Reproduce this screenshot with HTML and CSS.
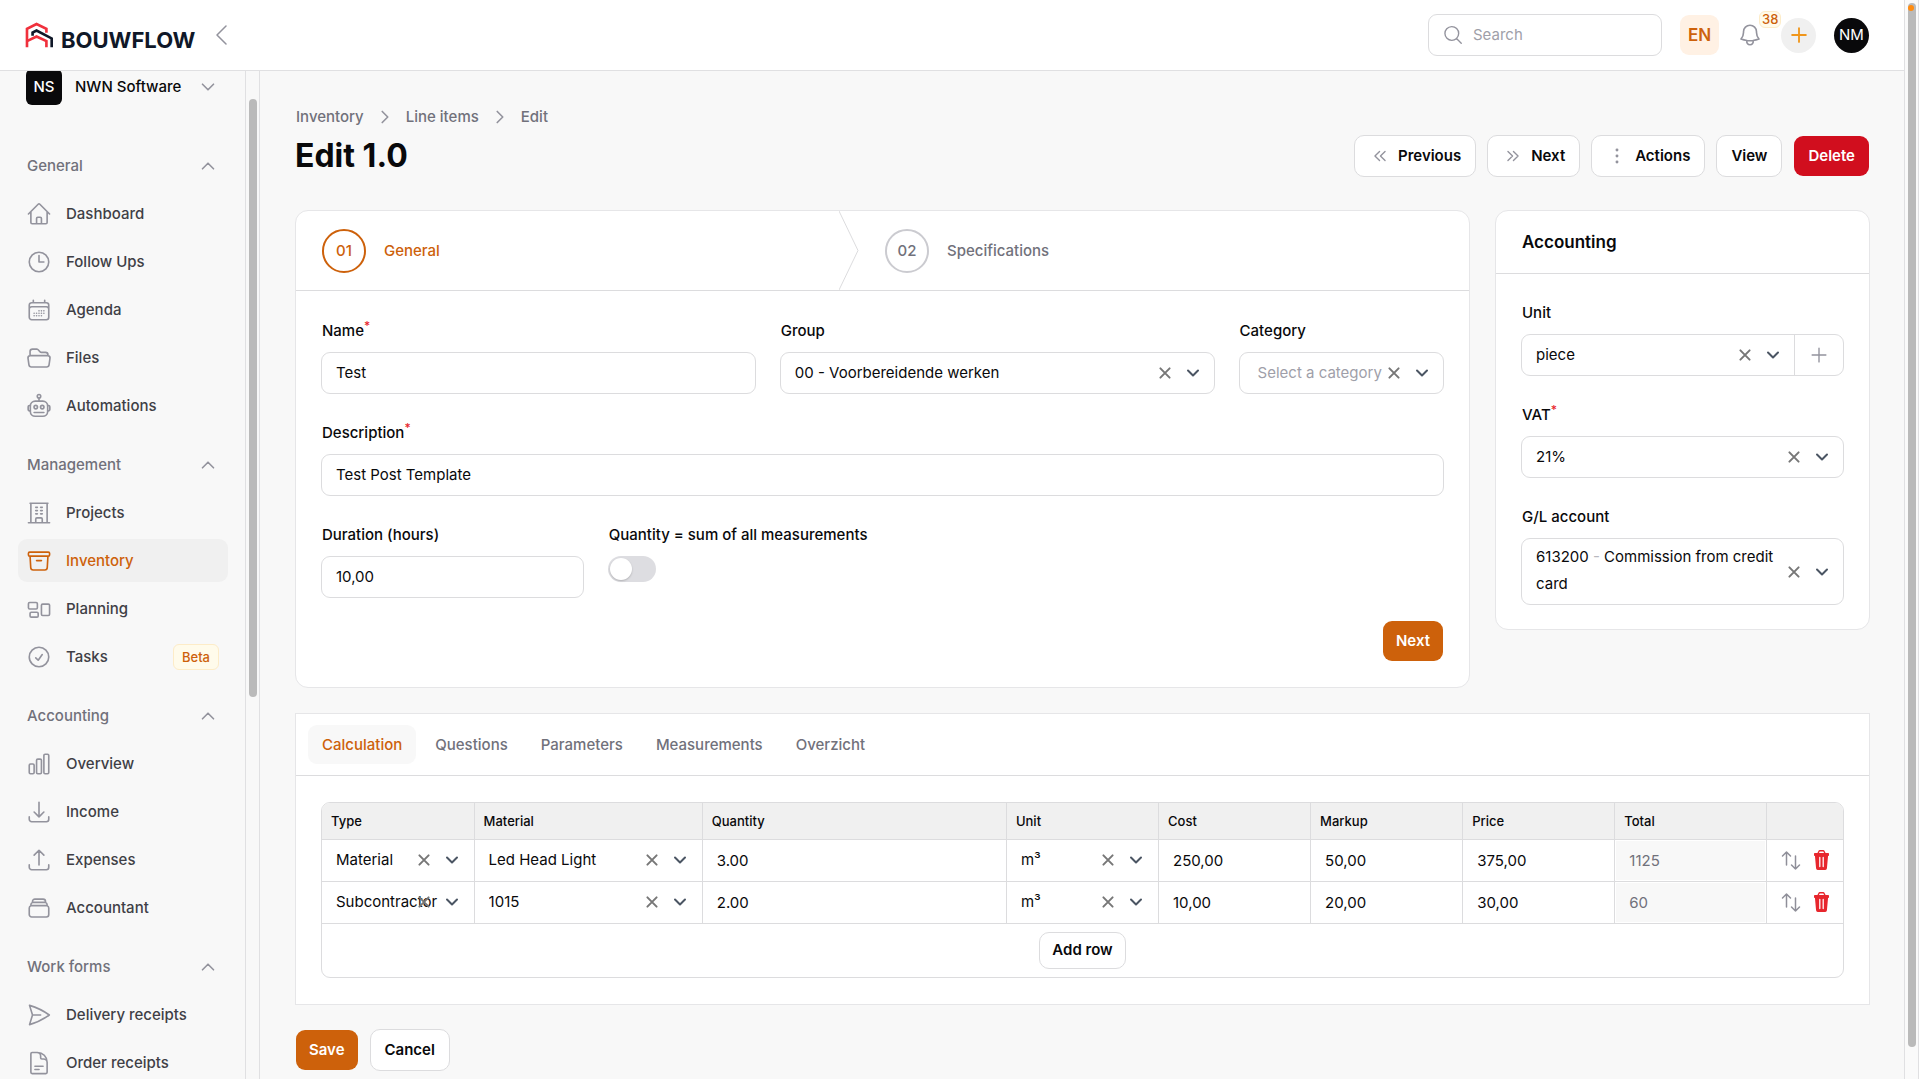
FILE: index.html
```html
<!DOCTYPE html>
<html lang="en">
<head>
    <meta charset="UTF-8">
    <meta name="viewport" content="width=device-width, initial-scale=1.0">
    <title>Edit 1.0 - Bouwflow</title>
    <link rel="stylesheet" href="styles.css">
</head>
<body>
    <!-- Shared icons -->
    <svg class="sprite" aria-hidden="true">
        <symbol id="i-down" viewBox="0 0 20 20"><path d="m5 7.500 5 5 5-5"/></symbol>
        <symbol id="i-up" viewBox="0 0 20 20"><path d="m5 12.500 5-5 5 5"/></symbol>
        <symbol id="i-right" viewBox="0 0 20 20"><path d="m7.500 5 5 5-5 5"/></symbol>
        <symbol id="i-x" viewBox="0 0 20 20"><path d="m5.400 5.400 9.200 9.200M14.600 5.400l-9.200 9.200"/></symbol>
        <symbol id="i-plus" viewBox="0 0 24 24"><path d="M12 4.500v15m7.500-7.500h-15"/></symbol>
        <symbol id="i-sort" viewBox="0 0 22 22"><path d="M6.500 16V3M2.500 7l4-4 4 4M15.500 7v13M11.500 16l4 4 4-4"/></symbol>
        <symbol id="i-trash" viewBox="0 0 20 22" preserveAspectRatio="none"><path fill="currentColor" stroke="none" d="M2 4h3.200L6.700 1.600Q7.100 1 7.800 1h4.400q.7 0 1.100.6L14.800 4H18a.8.8 0 0 1 .8.8v1.400a.8.8 0 0 1-.8.8h-.3l-1.300 12.200a2 2 0 0 1-2 1.800H5.600a2 2 0 0 1-2-1.800L2.300 7H2a.8.8 0 0 1-.8-.8V4.800A.8.8 0 0 1 2 4Zm5 0h6l-.9-1.500H7.900Z"/><path class="slits" d="M8 8.500v9M12 8.500v9"/></symbol>
    </svg>

    <div class="app">
        <div class="shell">
            <header class="topbar">
                <a class="logo" href="#" aria-label="Bouwflow">
                    <svg class="logo-mark" viewBox="76 64 88 82">
                        <path class="red" d="M82 144V88l29-15 30 15v12"/>
                        <path class="dark" d="M99 109V99l12-6 46 24v27"/>
                        <path class="red" d="m82 125 29-14 30 14v19"/>
                    </svg>
                    <span>BOUWFLOW</span>
                </a>
                <button class="collapse" aria-label="Collapse sidebar">
                    <svg viewBox="0 0 12 20"><path d="m11 1-9 9 9 9"/></svg>
                </button>
                <div class="topbar-end">
                    <label class="search">
                        <svg class="icon-sm" viewBox="0 0 24 24"><path d="m21 21-5.200-5.200m0 0A7.500 7.500 0 1 0 5.200 5.200a7.500 7.500 0 0 0 10.600 10.600Z"/></svg>
                        <input type="search" placeholder="Search" aria-label="Search">
                    </label>
                    <button class="lang">EN</button>
                    <button class="bell" aria-label="Notifications">
                        <svg class="icon" viewBox="0 0 24 24"><path d="M14.857 17.082a23.848 23.848 0 0 0 5.454-1.31A8.967 8.967 0 0 1 18 9.75V9A6 6 0 0 0 6 9v.75a8.967 8.967 0 0 1-2.312 6.022c1.733.64 3.56 1.085 5.455 1.31m5.714 0a24.255 24.255 0 0 1-5.714 0m5.714 0a3 3 0 1 1-5.714 0"/></svg>
                        <span class="count">38</span>
                    </button>
                    <button class="add" aria-label="Create"><svg viewBox="0 0 24 24"><use href="#i-plus"/></svg></button>
                    <button class="avatar">NM</button>
                </div>
            </header>

            <div class="body">
                <aside class="sidebar">
                    <button class="tenant">
                        <span class="tenant-logo">NS</span>
                        <span class="tenant-name">NWN Software</span>
                        <svg class="chevron"><use href="#i-down"/></svg>
                    </button>
                    <nav>
                        <section class="group">
                            <button class="group-title">General <svg class="chevron"><use href="#i-up"/></svg></button>
                            <a class="item" href="#"><svg class="icon" viewBox="0 0 24 24"><path d="m2.250 12 8.954-8.955c.44-.439 1.152-.439 1.591 0L21.750 12M4.500 9.750v10.125c0 .621.504 1.125 1.125 1.125H9.750v-4.875c0-.621.504-1.125 1.125-1.125h2.250c.621 0 1.125.504 1.125 1.125V21h4.125c.621 0 1.125-.504 1.125-1.125V9.750M8.250 21h8.250"/></svg>Dashboard</a>
                            <a class="item" href="#"><svg class="icon" viewBox="0 0 24 24"><path d="M12 6v6h4.500m4.500 0a9 9 0 1 1-18 0 9 9 0 0 1 18 0Z"/></svg>Follow Ups</a>
                            <a class="item" href="#"><svg class="icon" viewBox="0 0 24 24"><path d="M6.75 3v2.25M17.25 3v2.25M3 18.75V7.5a2.25 2.25 0 0 1 2.25-2.25h13.5A2.25 2.25 0 0 1 21 7.5v11.25m-18 0A2.25 2.25 0 0 0 5.25 21h13.5A2.25 2.25 0 0 0 21 18.75m-18 0v-7.5A2.25 2.25 0 0 1 5.25 9h13.5A2.25 2.25 0 0 1 21 11.25v7.5m-9-6h.008v.008H12v-.008ZM12 15h.008v.008H12V15Zm0 2.25h.008v.008H12v-.008ZM9.75 15h.008v.008H9.75V15Zm0 2.25h.008v.008H9.75v-.008ZM7.5 15h.008v.008H7.5V15Zm0 2.25h.008v.008H7.5v-.008Zm6.75-4.5h.008v.008h-.008v-.008Zm0 2.25h.008v.008h-.008V15Zm0 2.25h.008v.008h-.008v-.008Zm2.25-4.5h.008v.008H16.5v-.008Zm0 2.25h.008v.008H16.5V15Z"/></svg>Agenda</a>
                            <a class="item" href="#"><svg class="icon" viewBox="0 0 24 24"><path d="M3.75 9.776c.112-.017.227-.026.344-.026h15.812c.117 0 .232.009.344.026m-16.5 0a2.25 2.25 0 0 0-1.883 2.542l.857 6a2.25 2.25 0 0 0 2.227 1.932H19.05a2.25 2.25 0 0 0 2.227-1.932l.857-6a2.25 2.25 0 0 0-1.883-2.542m-16.5 0V6A2.25 2.25 0 0 1 6 3.75h3.879a1.5 1.5 0 0 1 1.06.44l2.122 2.12a1.5 1.5 0 0 0 1.06.44H18A2.25 2.25 0 0 1 20.25 9v.776"/></svg>Files</a>
                            <a class="item" href="#"><svg class="icon" viewBox="0 0 24 24"><rect x="4" y="7.500" width="16" height="14" rx="4.500"/><circle cx="12" cy="3" r="1.600"/><path d="M12 4.600v2.900M4 11.500H3.200a1.200 1.200 0 0 0-1.200 1.200v2.600a1.200 1.200 0 0 0 1.200 1.200H4M20 11.500h.8a1.200 1.200 0 0 1 1.200 1.200v2.600a1.200 1.200 0 0 1-1.200 1.200H20M7.500 18h9"/><circle cx="9" cy="13" r="1.600"/><circle cx="15" cy="13" r="1.600"/></svg>Automations</a>
                        </section>
                        <section class="group">
                            <button class="group-title">Management <svg class="chevron"><use href="#i-up"/></svg></button>
                            <a class="item" href="#"><svg class="icon" viewBox="0 0 24 24"><path d="M2.250 21h19.500M3.750 3h16.500M4.500 3v18m15-18v18M9 6.750h1.500m-1.500 3h1.500m-1.500 3h1.500m3-6H15m-1.500 3H15m-1.500 3H15M9 21v-3.375c0-.621.504-1.125 1.125-1.125h3.750c.621 0 1.125.504 1.125 1.125V21"/></svg>Projects</a>
                            <a class="item active" href="#"><svg class="icon" viewBox="0 0 24 24"><path d="m20.250 7.500-.625 10.632a2.250 2.250 0 0 1-2.247 2.118H6.622a2.250 2.250 0 0 1-2.247-2.118L3.750 7.500m6 4.125h4.500M3.375 7.500h17.250c.621 0 1.125-.504 1.125-1.125v-1.500c0-.621-.504-1.125-1.125-1.125H3.375c-.621 0-1.125.504-1.125 1.125v1.500c0 .621.504 1.125 1.125 1.125Z"/></svg>Inventory</a>
                            <a class="item" href="#"><svg class="icon" viewBox="0 0 24 24"><path d="M2.25 7.125C2.25 6.504 2.754 6 3.375 6h6c.621 0 1.125.504 1.125 1.125v3.75c0 .621-.504 1.125-1.125 1.125h-6a1.125 1.125 0 0 1-1.125-1.125v-3.75ZM14.25 8.625c0-.621.504-1.125 1.125-1.125h5.25c.621 0 1.125.504 1.125 1.125v8.25c0 .621-.504 1.125-1.125 1.125h-5.25a1.125 1.125 0 0 1-1.125-1.125v-8.25ZM3.75 16.125c0-.621.504-1.125 1.125-1.125h5.25c.621 0 1.125.504 1.125 1.125v2.25c0 .621-.504 1.125-1.125 1.125h-5.25a1.125 1.125 0 0 1-1.125-1.125v-2.25Z"/></svg>Planning</a>
                            <a class="item" href="#"><svg class="icon" viewBox="0 0 24 24"><path d="M9 12.750 11.250 15 15 9.750M21 12a9 9 0 1 1-18 0 9 9 0 0 1 18 0Z"/></svg>Tasks <span class="badge">Beta</span></a>
                        </section>
                        <section class="group">
                            <button class="group-title">Accounting <svg class="chevron"><use href="#i-up"/></svg></button>
                            <a class="item" href="#"><svg class="icon" viewBox="0 0 24 24"><path d="M3 13.125C3 12.504 3.504 12 4.125 12h2.25c.621 0 1.125.504 1.125 1.125v6.75C7.5 20.496 6.996 21 6.375 21h-2.25A1.125 1.125 0 0 1 3 19.875v-6.75ZM9.75 8.625c0-.621.504-1.125 1.125-1.125h2.25c.621 0 1.125.504 1.125 1.125v11.25c0 .621-.504 1.125-1.125 1.125h-2.25a1.125 1.125 0 0 1-1.125-1.125V8.625ZM16.5 4.125c0-.621.504-1.125 1.125-1.125h2.25C20.496 3 21 3.504 21 4.125v15.75c0 .621-.504 1.125-1.125 1.125h-2.25a1.125 1.125 0 0 1-1.125-1.125V4.125Z"/></svg>Overview</a>
                            <a class="item" href="#"><svg class="icon" viewBox="0 0 24 24"><path d="M3 16.500v2.250A2.250 2.250 0 0 0 5.250 21h13.500A2.250 2.250 0 0 0 21 18.750V16.500M16.500 12 12 16.500m0 0L7.500 12m4.500 4.500V3"/></svg>Income</a>
                            <a class="item" href="#"><svg class="icon" viewBox="0 0 24 24"><path d="M3 16.500v2.250A2.250 2.250 0 0 0 5.250 21h13.500A2.250 2.250 0 0 0 21 18.750V16.500m-13.500-9L12 3m0 0 4.500 4.500M12 3v13.500"/></svg>Expenses</a>
                            <a class="item" href="#"><svg class="icon" viewBox="0 0 24 24"><path d="M6 6.878V6a2.25 2.25 0 0 1 2.25-2.25h7.5A2.25 2.25 0 0 1 18 6v.878m-12 0c.235-.083.487-.128.75-.128h10.5c.263 0 .515.045.75.128m-12 0A2.25 2.25 0 0 0 4.5 9v.878m13.5-3A2.25 2.25 0 0 1 19.5 9v.878m0 0a2.246 2.246 0 0 0-.75-.128H5.25c-.263 0-.515.045-.75.128m15 0A2.25 2.25 0 0 1 21 12v6a2.25 2.25 0 0 1-2.25 2.25H5.25A2.25 2.25 0 0 1 3 18v-6c0-.98.626-1.813 1.5-2.122"/></svg>Accountant</a>
                        </section>
                        <section class="group">
                            <button class="group-title">Work forms <svg class="chevron"><use href="#i-up"/></svg></button>
                            <a class="item" href="#"><svg class="icon" viewBox="0 0 24 24"><path d="M6 12 3.269 3.125A59.769 59.769 0 0 1 21.485 12 59.768 59.768 0 0 1 3.270 20.875L5.999 12Zm0 0h7.500"/></svg>Delivery receipts</a>
                            <a class="item" href="#"><svg class="icon" viewBox="0 0 24 24"><path d="M19.500 14.250v-2.625a3.375 3.375 0 0 0-3.375-3.375h-1.500A1.125 1.125 0 0 1 13.500 7.125v-1.500a3.375 3.375 0 0 0-3.375-3.375H8.250m0 12.750h7.500m-7.500 3H12M10.500 2.250H5.625c-.621 0-1.125.504-1.125 1.125v17.250c0 .621.504 1.125 1.125 1.125h12.750c.621 0 1.125-.504 1.125-1.125V11.250a9 9 0 0 0-9-9Z"/></svg>Order receipts</a>
                        </section>
                    </nav>
                </aside>
                <div class="rail sidebar-rail"><div class="thumb"></div></div>

                <main class="main">
                    <nav class="breadcrumbs" aria-label="Breadcrumb">
                        <a href="#">Inventory</a>
                        <svg class="chevron"><use href="#i-right"/></svg>
                        <a href="#">Line items</a>
                        <svg class="chevron"><use href="#i-right"/></svg>
                        <span>Edit</span>
                    </nav>
                    <div class="heading">
                        <h1>Edit 1.0</h1>
                        <div class="actions">
                            <button class="btn"><svg class="icon-sm" viewBox="0 0 24 24"><path d="m17.500 17-5-5 5-5m-6 10-5-5 5-5"/></svg>Previous</button>
                            <button class="btn"><svg class="icon-sm" viewBox="0 0 24 24"><path d="m6.500 7 5 5-5 5m6-10 5 5-5 5"/></svg>Next</button>
                            <button class="btn"><svg class="icon-sm dots" viewBox="0 0 24 24"><circle cx="12" cy="5.500" r="1.600"/><circle cx="12" cy="12" r="1.600"/><circle cx="12" cy="18.500" r="1.600"/></svg>Actions</button>
                            <button class="btn">View</button>
                            <button class="btn danger">Delete</button>
                        </div>
                    </div>

                    <div class="columns">
                        <section class="card wizard">
                            <ol class="steps">
                                <li class="step current">
                                    <button><span class="step-no">01</span>General</button>
                                    <svg class="step-arrow" viewBox="0 0 20 80" preserveAspectRatio="none"><path d="M0 0l19 40L0 80"/></svg>
                                </li>
                                <li class="step"><button><span class="step-no">02</span>Specifications</button></li>
                            </ol>
                            <form class="wizard-form">
                                <div class="row row-main">
                                    <div class="field wide">
                                        <label for="name">Name<sup>*</sup></label>
                                        <input class="box" id="name" type="text" value="Test">
                                    </div>
                                    <div class="field wide">
                                        <label for="group">Group</label>
                                        <div class="box select">
                                            <select id="group"><option>00 - Voorbereidende werken</option></select>
                                            <span class="tools"><button type="button" aria-label="Clear group"><svg class="x"><use href="#i-x"/></svg></button><svg class="caret"><use href="#i-down"/></svg></span>
                                        </div>
                                    </div>
                                    <div class="field">
                                        <label for="category">Category</label>
                                        <div class="box select empty">
                                            <select id="category"><option>Select a category</option></select>
                                            <span class="tools"><button type="button" aria-label="Clear category"><svg class="x"><use href="#i-x"/></svg></button><svg class="caret"><use href="#i-down"/></svg></span>
                                        </div>
                                    </div>
                                </div>
                                <div class="row">
                                    <div class="field">
                                        <label for="description">Description<sup>*</sup></label>
                                        <input class="box" id="description" type="text" value="Test Post Template">
                                    </div>
                                </div>
                                <div class="row row-quarter">
                                    <div class="field">
                                        <label for="duration">Duration (hours)</label>
                                        <input class="box" id="duration" type="text" value="10,00">
                                    </div>
                                    <div class="field wide">
                                        <label for="sum">Quantity = sum of all measurements</label>
                                        <input class="toggle" id="sum" type="checkbox" role="switch">
                                    </div>
                                </div>
                                <div class="wizard-end"><button class="btn primary" type="button">Next</button></div>
                            </form>
                        </section>

                        <section class="card accounting">
                            <h2>Accounting</h2>
                            <div class="accounting-body">
                                <div class="field">
                                    <label for="unit">Unit</label>
                                    <div class="box with-suffix">
                                        <div class="select">
                                            <select id="unit"><option>piece</option></select>
                                            <span class="tools"><button type="button" aria-label="Clear unit"><svg class="x"><use href="#i-x"/></svg></button><svg class="caret"><use href="#i-down"/></svg></span>
                                        </div>
                                        <button class="suffix" type="button" aria-label="Add unit"><svg class="icon-sm"><use href="#i-plus"/></svg></button>
                                    </div>
                                </div>
                                <div class="field">
                                    <label for="vat">VAT<sup>*</sup></label>
                                    <div class="box select">
                                        <select id="vat"><option>21%</option></select>
                                        <span class="tools"><button type="button" aria-label="Clear VAT"><svg class="x"><use href="#i-x"/></svg></button><svg class="caret"><use href="#i-down"/></svg></span>
                                    </div>
                                </div>
                                <div class="field">
                                    <label for="gl">G/L account</label>
                                    <div class="box select">
                                        <button class="combo" id="gl" type="button" role="combobox" aria-haspopup="listbox" aria-expanded="false">613200 <i>-</i> Commission from credit card</button>
                                        <span class="tools"><button type="button" aria-label="Clear G/L account"><svg class="x"><use href="#i-x"/></svg></button><svg class="caret"><use href="#i-down"/></svg></span>
                                    </div>
                                </div>
                            </div>
                        </section>
                    </div>

                    <section class="panel">
                        <div class="tabs" role="tablist">
                            <button class="tab active" role="tab" aria-selected="true">Calculation</button>
                            <button class="tab" role="tab">Questions</button>
                            <button class="tab" role="tab">Parameters</button>
                            <button class="tab" role="tab">Measurements</button>
                            <button class="tab" role="tab">Overzicht</button>
                        </div>
                        <div class="panel-body">
                            <div class="table-wrap">
                                <table>
                                    <colgroup>
                                        <col class="c10"><col class="c15"><col class="c20"><col class="c10"><col class="c10"><col class="c10"><col class="c10"><col class="c10"><col class="c5">
                                    </colgroup>
                                    <thead>
                                        <tr><th>Type</th><th>Material</th><th>Quantity</th><th>Unit</th><th>Cost</th><th>Markup</th><th>Price</th><th>Total</th><th></th></tr>
                                    </thead>
                                    <tbody>
                                        <tr>
                                            <td><div class="select"><select aria-label="Type"><option>Material</option></select><span class="tools"><button aria-label="Clear"><svg class="x"><use href="#i-x"/></svg></button><svg class="caret"><use href="#i-down"/></svg></span></div></td>
                                            <td><div class="select"><select aria-label="Material"><option>Led Head Light</option></select><span class="tools"><button aria-label="Clear"><svg class="x"><use href="#i-x"/></svg></button><svg class="caret"><use href="#i-down"/></svg></span></div></td>
                                            <td><input type="text" aria-label="Quantity" value="3.00"></td>
                                            <td><div class="select"><select aria-label="Unit"><option>m³</option></select><span class="tools"><button aria-label="Clear"><svg class="x"><use href="#i-x"/></svg></button><svg class="caret"><use href="#i-down"/></svg></span></div></td>
                                            <td><input type="text" aria-label="Cost" value="250,00"></td>
                                            <td><input type="text" aria-label="Markup" value="50,00"></td>
                                            <td><input type="text" aria-label="Price" value="375,00"></td>
                                            <td><input type="text" aria-label="Total" value="1125" disabled></td>
                                            <td><div class="row-tools"><button aria-label="Move"><svg class="sort"><use href="#i-sort"/></svg></button><button aria-label="Delete row"><svg class="trash"><use href="#i-trash"/></svg></button></div></td>
                                        </tr>
                                        <tr>
                                            <td><div class="select"><select aria-label="Type"><option>Subcontractor</option></select><span class="tools"><button aria-label="Clear"><svg class="x"><use href="#i-x"/></svg></button><svg class="caret"><use href="#i-down"/></svg></span></div></td>
                                            <td><div class="select"><select aria-label="Material"><option>1015</option></select><span class="tools"><button aria-label="Clear"><svg class="x"><use href="#i-x"/></svg></button><svg class="caret"><use href="#i-down"/></svg></span></div></td>
                                            <td><input type="text" aria-label="Quantity" value="2.00"></td>
                                            <td><div class="select"><select aria-label="Unit"><option>m³</option></select><span class="tools"><button aria-label="Clear"><svg class="x"><use href="#i-x"/></svg></button><svg class="caret"><use href="#i-down"/></svg></span></div></td>
                                            <td><input type="text" aria-label="Cost" value="10,00"></td>
                                            <td><input type="text" aria-label="Markup" value="20,00"></td>
                                            <td><input type="text" aria-label="Price" value="30,00"></td>
                                            <td><input type="text" aria-label="Total" value="60" disabled></td>
                                            <td><div class="row-tools"><button aria-label="Move"><svg class="sort"><use href="#i-sort"/></svg></button><button aria-label="Delete row"><svg class="trash"><use href="#i-trash"/></svg></button></div></td>
                                        </tr>
                                    </tbody>
                                </table>
                                <div class="table-end"><button class="btn small">Add row</button></div>
                            </div>
                        </div>
                    </section>

                    <div class="form-actions">
                        <button class="btn primary">Save</button>
                        <button class="btn">Cancel</button>
                    </div>
                </main>
            </div>
        </div>
        <div class="rail page-rail"><div class="thumb"><span class="marker"></span></div></div>
    </div>
</body>
</html>
```

FILE: styles.css
```css
* {
    box-sizing: border-box;
}

body {
    margin: 0;
    background: #f8f8f8;
    color: #09090b;
    font-family: Inter, "Liberation Sans", sans-serif;
    font-size: 15px;
    line-height: 22px;
}

h1, h2, ol {
    margin: 0;
    padding: 0;
}

a {
    color: inherit;
    text-decoration: none;
}

button, input, select {
    margin: 0;
    padding: 0;
    border: 0;
    background: transparent;
    color: inherit;
    font: inherit;
}

button {
    cursor: pointer;
}

svg {
    display: block;
    flex: none;
    fill: none;
    stroke: currentColor;
    stroke-width: 1.5;
    stroke-linecap: round;
    stroke-linejoin: round;
}

.sprite {
    display: none;
}

.icon {
    width: 26px;
    height: 26px;
    color: #93939d;
}

.icon-sm {
    width: 22px;
    height: 22px;
    color: #93939d;
}

.chevron {
    width: 22px;
    height: 22px;
    color: #93939d;
}

.app {
    display: flex;
    height: 100vh;
    overflow: hidden;
}

.shell {
    flex: 1;
    min-width: 0;
    display: flex;
    flex-direction: column;
}

/* Top bar */
.topbar {
    flex: none;
    display: flex;
    align-items: center;
    height: 71px;
    padding: 0 35px 0 25px;
    background: white;
    border-bottom: 1px solid #e0e0e2;
}

.logo {
    display: flex;
    align-items: baseline;
    gap: 7px;
    padding-top: 2px;
    color: #101828;
    font-size: 22px;
    font-weight: 700;
}

.logo-mark {
    width: 29px;
    height: 27px;
    stroke-width: 8;
    stroke-linecap: butt;
    stroke-linejoin: miter;
}

.logo-mark .red {
    stroke: #f0303c;
}

.logo-mark .dark {
    stroke: #101828;
}

.collapse {
    margin-left: 20px;
    color: #93939d;
}

.collapse svg {
    width: 12px;
    height: 20px;
}

.topbar-end {
    display: flex;
    align-items: center;
    gap: 18px;
    margin-left: auto;
}

.search {
    display: flex;
    align-items: center;
    gap: 9px;
    width: 234px;
    height: 42px;
    padding: 0 13px;
    background: white;
    border: 1px solid #dcdcde;
    border-radius: 9px;
}

.search input {
    flex: 1;
    min-width: 0;
    outline: none;
}

.search input::placeholder {
    color: #9f9fa9;
}

.lang {
    width: 39px;
    height: 40px;
    border-radius: 9px;
    background: #fff1e4;
    color: #cd610b;
    font-size: 17px;
    font-weight: 600;
}

.bell {
    position: relative;
}

.count {
    position: absolute;
    top: -11px;
    left: 22px;
    padding: 0 2px;
    border: 1px solid #fdecc8;
    border-radius: 6px;
    background: #fffbeb;
    color: #cd610b;
    font-size: 13px;
    font-weight: 500;
    line-height: 15px;
}

.add, .avatar {
    width: 35px;
    height: 35px;
    border-radius: 50%;
}

.add {
    display: grid;
    place-items: center;
    background: #f0f0f0;
    color: #f0961b;
}

.add svg {
    width: 22px;
    height: 22px;
    stroke-width: 2;
}

.avatar {
    background: #09090b;
    color: white;
}

/* Sidebar */
.body {
    flex: 1;
    display: flex;
    min-height: 0;
}

.sidebar {
    flex: none;
    width: 246px;
    padding: 0 17px 0 18px;
    overflow: hidden;
    border-right: 1px solid #e0e0e2;
}

/* Scrolled slightly under the top bar */
.tenant {
    display: flex;
    align-items: center;
    width: 100%;
    margin-top: -2px;
    padding: 0 9px 0 8px;
    font-weight: 500;
}

.tenant-logo {
    width: 36px;
    height: 36px;
    margin-right: 13px;
    border-radius: 6px;
    background: #09090b;
    color: white;
    line-height: 36px;
}

.tenant .chevron, .group-title .chevron {
    margin-left: auto;
}

.sidebar nav {
    display: flex;
    flex-direction: column;
    gap: 16px;
    padding-top: 39px;
}

.group {
    display: flex;
    flex-direction: column;
    gap: 5px;
}

.group-title {
    display: flex;
    align-items: center;
    height: 43px;
    padding: 0 9px;
    color: #71717b;
    font-weight: 500;
}

.item {
    display: flex;
    align-items: center;
    gap: 14px;
    height: 43px;
    padding: 0 9px 0 8px;
    border-radius: 9px;
    color: #3f3f46;
    font-weight: 500;
}

.item.active {
    background: #f0f0f0;
    color: #cd610b;
}

.item.active .icon {
    color: #cd610b;
}

.badge {
    margin-left: auto;
    padding: 0 8px;
    border: 1px solid #fdecc8;
    border-radius: 6px;
    background: #fffbeb;
    color: #cd610b;
    font-size: 13px;
    line-height: 24px;
}

/* Scroll rails */
.rail {
    flex: none;
    display: flex;
    flex-direction: column;
    align-items: center;
    border-right: 1px solid #e0e0e2;
}

.thumb {
    width: 8px;
    border-radius: 4px;
    background: #bababa;
}

.sidebar-rail {
    width: 14px;
    padding-top: 28px;
}

.sidebar-rail .thumb {
    height: 61%;
}

.page-rail {
    width: 15px;
    padding-top: 3px;
    border-left: 1px solid #e0e0e2;
    background: #fafafa;
}

.page-rail .thumb {
    height: 97%;
}

.marker {
    display: block;
    width: 6px;
    height: 6px;
    margin-top: 2px;
    border-radius: 50%;
    background: #ff8c10;
}

/* Main */
.main {
    flex: 1;
    min-width: 0;
    padding: 35px 34px 0 35px;
    overflow: hidden;
}

.breadcrumbs {
    display: flex;
    align-items: center;
    gap: 10px;
    padding-left: 1px;
    color: #71717b;
    font-weight: 500;
}

.heading {
    display: flex;
    align-items: center;
    justify-content: space-between;
    margin-top: 7px;
}

h1 {
    font-size: 32px;
    font-weight: 700;
    line-height: 40px;
}

.actions {
    display: flex;
    align-items: center;
    gap: 11px;
}

.btn {
    display: inline-flex;
    align-items: center;
    gap: 7px;
    height: 42px;
    padding: 0 14px;
    border: 1px solid #dcdcde;
    border-radius: 10px;
    background: white;
    color: #09090b;
    font-weight: 600;
}

.btn.primary, .btn.danger {
    border-color: transparent;
    background-clip: padding-box;
    color: white;
}

.btn.primary {
    padding: 0 13px;
    background-color: #cd610b;
}

.btn.danger {
    background-color: #d10e1e;
}

.btn.small {
    height: 37px;
    padding: 0 12px;
}

.dots {
    fill: currentColor;
    stroke: none;
}

.columns {
    display: grid;
    grid-template-columns: repeat(4, 1fr);
    align-items: start;
    gap: 25px;
    margin-top: 33px;
}

.card {
    overflow: hidden;
    border: 1px solid #e6e6e8;
    border-radius: 13px;
    background: white;
}

.wizard {
    grid-column: span 3;
}

.steps {
    display: grid;
    grid-template-columns: 12fr 13fr;
    border-bottom: 1px solid #dcdcde;
    list-style: none;
}

.step {
    display: flex;
    justify-content: space-between;
    color: #71717b;
    font-weight: 500;
}

.step button {
    display: flex;
    align-items: center;
    gap: 18px;
    height: 79px;
    padding: 0 26px;
}

.step-no {
    display: grid;
    place-items: center;
    width: 44px;
    height: 44px;
    border: 2px solid #cbcbd0;
    border-radius: 50%;
}

.step.current {
    color: #cd610b;
}

.step.current .step-no {
    border-color: #cd610b;
}

.step-arrow {
    width: 20px;
    height: 79px;
    color: #dcdcde;
    stroke-width: 1;
}

.wizard-form {
    display: flex;
    flex-direction: column;
    gap: 26px;
    padding: 27px 25px 25px;
}

.row {
    display: grid;
    gap: 24px;
}

.row-main {
    grid-template-columns: repeat(5, 1fr);
}

.row-quarter {
    grid-template-columns: repeat(4, 1fr);
}

.wide {
    grid-column: span 2;
}

.field {
    display: flex;
    flex-direction: column;
    gap: 8px;
    min-width: 0;
}

.field label {
    padding-left: 1px;
    font-weight: 500;
    line-height: 26px;
}

sup {
    color: #e7262d;
    font-size: 12px;
    line-height: 0;
    vertical-align: 6px;
}

.box {
    width: 100%;
    min-height: 42px;
    border: 1px solid #dcdcde;
    border-radius: 9px;
    background: white;
}

input.box {
    padding: 0 14px;
}

/* The select fills the box, its clear button and caret sit on top */
.select {
    display: grid;
    align-items: center;
}

.select > * {
    grid-area: 1 / 1;
}

.select select {
    width: 100%;
    height: 40px;
    padding-left: 14px;
    appearance: none;
    outline: none;
}

.select.empty select {
    padding-left: 18px;
    color: #9f9fa9;
}

.tools {
    justify-self: end;
    display: flex;
    align-items: center;
    gap: 8px;
    padding-right: 11px;
}

.x {
    width: 20px;
    height: 20px;
    color: #777;
    stroke-width: 2;
}

.caret {
    width: 20px;
    height: 20px;
    color: #4b5563;
    stroke-width: 2;
}

.combo {
    padding: 4px 60px 7px 14px;
    line-height: 27px;
    text-align: left;
}

.combo i {
    color: #b8b8be;
    font-style: normal;
}

.with-suffix {
    display: flex;
}

.with-suffix .select {
    flex: 1;
}

.suffix {
    display: grid;
    place-items: center;
    width: 49px;
    border-left: 1px solid #dcdcde;
}

.toggle {
    width: 48px;
    height: 26px;
    padding: 2px;
    border-radius: 13px;
    background: #dddde1;
    appearance: none;
}

.toggle::before {
    content: "";
    display: block;
    width: 22px;
    height: 22px;
    border-radius: 50%;
    background: white;
    box-shadow: 0 1px 2px rgba(0, 0, 0, 0.2);
}

.wizard-end {
    display: flex;
    justify-content: flex-end;
    margin-top: -4px;
}

.accounting h2 {
    padding: 18px 26px;
    border-bottom: 1px solid #dcdcde;
    font-size: 17px;
    font-weight: 600;
    line-height: 26px;
}

.accounting-body {
    display: flex;
    flex-direction: column;
    gap: 26px;
    padding: 26px 25px 24px;
}

/* Calculation panel */
.panel {
    margin-top: 25px;
    border: 1px solid #e6e6e8;
    background: white;
}

.tabs {
    display: flex;
    gap: 5px;
    padding: 11px 12px;
    border-bottom: 1px solid #dcdcde;
}

.tab {
    height: 39px;
    padding: 0 14px;
    border-radius: 9px;
    color: #71717b;
    font-weight: 500;
}

.tab.active {
    background: #f8f8f8;
    color: #cd610b;
}

.panel-body {
    padding: 26px 25px;
}

.table-wrap {
    overflow: hidden;
    border: 1px solid #dcdcde;
    border-radius: 9px;
}

table {
    width: 100%;
    border-collapse: collapse;
    table-layout: fixed;
}

.c5 {
    width: 5%;
}

.c10 {
    width: 10%;
}

.c15 {
    width: 15%;
}

.c20 {
    width: 20%;
}

th, td {
    border-right: 1px solid #dcdcde;
    border-bottom: 1px solid #dcdcde;
}

th:last-child, td:last-child {
    border-right: 0;
}

th {
    height: 36px;
    padding: 0 9px;
    background: #f0f0f0;
    font-size: 13px;
    font-weight: 500;
    text-align: left;
}

td {
    padding: 1px;
}

td input, td .select select {
    display: block;
    width: 100%;
    height: 39px;
    padding: 0 13px;
}

td input:disabled {
    background: #f8f8f8;
    color: #71717b;
}

.row-tools {
    display: flex;
    align-items: center;
    justify-content: center;
    gap: 11px;
}

.sort {
    width: 22px;
    height: 22px;
    color: #8f8f99;
}

.trash {
    width: 17px;
    height: 22px;
    color: #e7262d;
}

.slits {
    stroke: white;
}

.table-end {
    display: flex;
    justify-content: center;
    padding: 8px;
}

.form-actions {
    display: flex;
    gap: 11px;
    margin-top: 24px;
}
```
